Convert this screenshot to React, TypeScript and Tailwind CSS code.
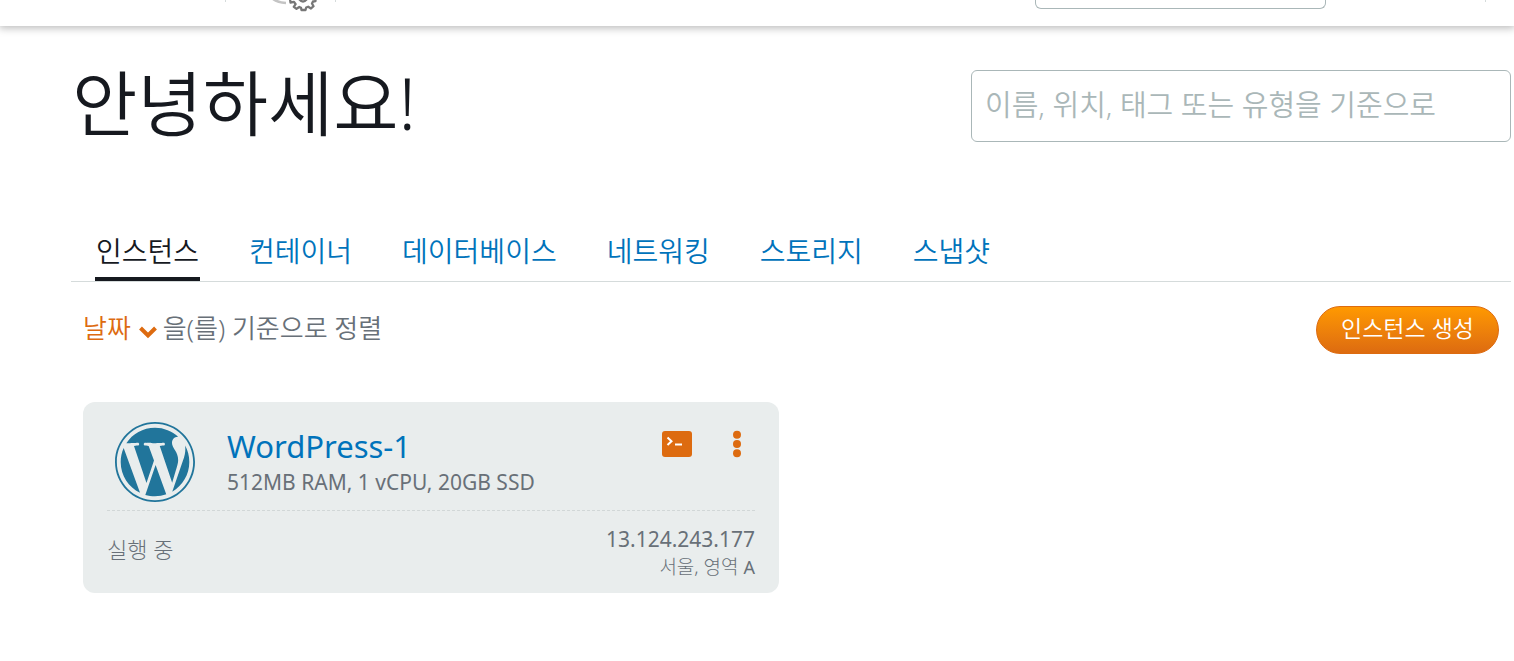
import React from "react";
import { FaWordpress } from "react-icons/fa";

const tabs = ["인스턴스", "컨테이너", "데이터베이스", "네트워킹", "스토리지", "스냅샷"];

function TopBar() {
  return (
    <header className="flex h-[26px] items-start bg-white pl-[225px] pr-7 shadow-[0_1px_8px_1px_rgba(0,0,0,0.28)]">
      <div className="flex h-3 w-[111px] items-start justify-center">
        <span className="h-[2px] w-px bg-[#d5dbdb]" />
        <div className="flex flex-1 justify-center pl-[28px]">
          <svg width="46" height="12" viewBox="0 0 46 12" fill="none" aria-hidden="true">
            <path d="M1 -1 Q6 2.500 14 3" stroke="#c4c4c4" strokeWidth="2.600" />
            <path
              d="M18 -1 L18.500 2.500 L22 1.800 L23.600 4.200 L21.800 6.800 L24.500 8.800 L27.300 7 L29 7.800 L29.500 10 L33.500 10 L34.200 7.500 L36.200 6.700 L39 8.500 L41.500 6.200 L40 3.500 L41 1.500 L43.500 1 L43.500 -1"
              stroke="#777"
              strokeWidth="2.300"
              strokeLinejoin="round"
            />
            <path d="M27 -1 Q31 4 35 -1" stroke="#777" strokeWidth="2.300" />
          </svg>
        </div>
        <span className="h-[2px] w-px bg-[#d5dbdb]" />
      </div>
      <input
        type="search"
        aria-label="검색"
        className="ml-auto mr-[159px] h-[9px] w-[291px] rounded-b-md border border-t-0 border-[#aab7b8] bg-white outline-none"
      />
      <span className="h-[2px] w-px bg-[#d5dbdb]" />
    </header>
  );
}

function InstanceCard() {
  return (
    <article className="rounded-xl bg-[#e9eded] px-6 pb-[14px] pt-5 text-[#687078]">
      <div className="flex items-start border-b border-dashed border-[#d1d7d7] pb-2 pl-2">
        <FaWordpress
          viewBox="8 8 496 496"
          className="size-20 shrink-0 text-[#21759b]"
          aria-hidden="true"
        />
        <div className="ml-8 min-w-0 flex-1 pt-1">
          <h2 className="text-[31px] leading-10 text-[#0073bb]">
            <a href="#wordpress-1">WordPress-1</a>
          </h2>
          <p className="text-[21px] leading-8">512MB RAM, 1 vCPU, 20GB SSD</p>
        </div>
        <div className="flex items-center gap-10 pr-[13px] pt-2">
          <button type="button" aria-label="SSH를 사용하여 연결">
            <svg width="30" height="28" viewBox="0 0 30 28" fill="none">
              <rect y="1" width="30" height="26" rx="3" fill="#dd6b10" />
              <path d="M5.500 7.500 L9.500 11.200 L5.500 15" stroke="white" strokeWidth="2" />
              <path d="M13 14.500 H20" stroke="white" strokeWidth="2" />
            </svg>
          </button>
          <button type="button" aria-label="메뉴">
            <svg width="10" height="28" viewBox="0 0 10 28" fill="#dd6b10">
              <circle cx="5" cy="4.800" r="4" />
              <circle cx="5" cy="14" r="4" />
              <circle cx="5" cy="23.200" r="4" />
            </svg>
          </button>
        </div>
      </div>
      <div className="flex items-center justify-between pt-3">
        <p className="pb-1 text-[22px] font-light leading-8">실행 중</p>
        <div className="text-right">
          <p className="text-[21px] leading-8">13.124.243.177</p>
          <p className="text-[19px] font-light leading-6">
            서울, 영역 <span className="text-lg font-normal leading-6">A</span>
          </p>
        </div>
      </div>
    </article>
  );
}

export default function App() {
  return (
    <div className="min-h-screen bg-white font-['Noto_Sans','Noto_Sans_CJK_KR',sans-serif] text-[#16191f]">
      <TopBar />
      <main className="pb-16 pl-[71px] pr-[3px] pt-11">
        <div className="flex items-start justify-between">
          <h1 className="pl-px text-[71px] font-[350] leading-[66px]">안녕하세요!</h1>
          <input
            type="search"
            aria-label="이름, 위치, 태그 또는 유형을 기준으로 필터링"
            placeholder="이름, 위치, 태그 또는 유형을 기준으로"
            className="h-[72px] w-[540px] rounded-md border border-[#aab7b8] px-[13px] pb-1 text-[29px] font-[350] outline-none placeholder:text-[#aab7b8]"
          />
        </div>
        <nav
          aria-label="리소스"
          className="mt-[84px] flex gap-12 border-b border-[#d5dbdb] px-6 text-[28px] font-[350] leading-[50px]"
        >
          {tabs.map((tab, i) => (
            <a
              key={tab}
              href={`#${i}`}
              aria-current={i === 0 ? "page" : undefined}
              className={
                i === 0
                  ? "border-b-4 border-[#16191f] px-px pb-px"
                  : "border-b-4 border-transparent px-px pb-px text-[#0073bb]"
              }
            >
              {tab}
            </a>
          ))}
        </nav>
        <div className="flex items-center justify-between px-3 pt-6">
          <div className="flex items-center pb-1 text-[26px] font-[350] leading-10 text-[#687078]">
            <button type="button" className="flex items-center gap-2 text-[#dd6b10]">
              날짜
              <svg width="18" height="14" viewBox="0 0 18 14" fill="none" className="mt-2" aria-hidden="true">
                <path d="M1.500 3 L9 10.500 L16.500 3" stroke="#dd6b10" strokeWidth="4" />
              </svg>
            </button>
            <span className="ml-[6px]">을(를) 기준으로 정렬</span>
          </div>
          <button
            type="button"
            className="h-12 rounded-full border border-[#dd6b10] bg-linear-to-b from-[#ff9900] to-[#dd6b10] px-6 pb-1 text-[23px] font-[350] text-white"
          >
            인스턴스 생성
          </button>
        </div>
        <section aria-label="인스턴스" className="mt-12 grid grid-cols-2 gap-6 px-3">
          <InstanceCard />
        </section>
      </main>
    </div>
  );
}
